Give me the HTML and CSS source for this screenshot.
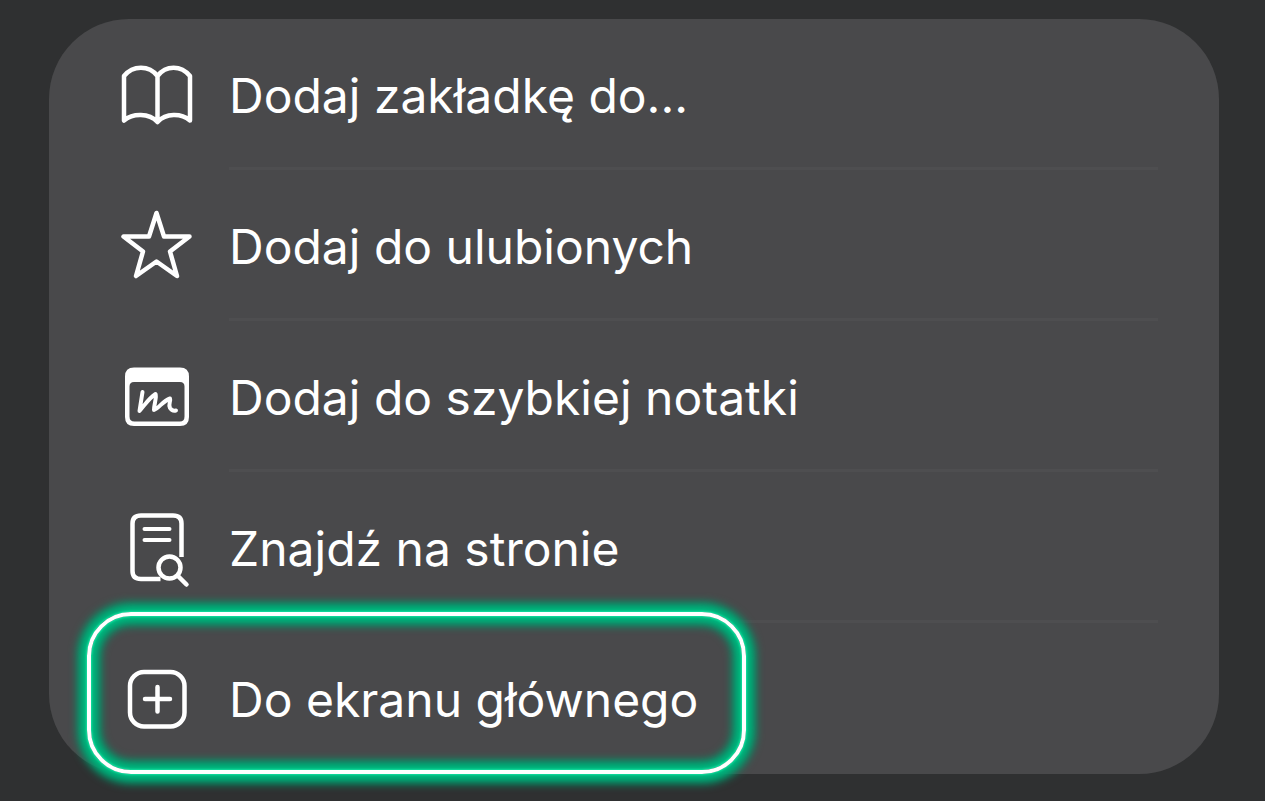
FILE: index.html
```html
<!DOCTYPE html>
<html lang="pl">
<head>
  <meta charset="UTF-8">
  <meta name="viewport" content="width=device-width, initial-scale=1">
  <title>Udostępnij</title>
  <link rel="stylesheet" href="styles.css">
</head>

<body>

  <main class="menu">
    <button type="button" class="menu-item">
      <svg class="icon" viewBox="0 0 72 80" aria-hidden="true">
        <path d="M3 23C12 12 28 12 36.500 23C45 12 60 12 69 23V67.500C60 60 45 60 36.500 69C28 60 12 60 3 67.500ZM36.500 23V69"/>
      </svg>
      <span class="label">Dodaj zakładkę do...</span>
    </button>

    <button type="button" class="menu-item">
      <svg class="icon" viewBox="0 0 72 80" aria-hidden="true">
        <path d="M35.500 9L43 32.500H68.500L49 47.500L56 72L35.500 57.500L15 72L22 47.500L2.500 32.500H28Z"/>
      </svg>
      <span class="label">Dodaj do ulubionych</span>
    </button>

    <button type="button" class="menu-item">
      <svg class="icon" viewBox="0 0 72 80" aria-hidden="true">
        <path class="solid" fill-rule="evenodd" d="M13 12.500H59Q68 12.500 68 21.500V62Q68 71 59 71H13Q4 71 4 62V21.500Q4 12.500 13 12.500ZM13 27Q8.500 27 8.500 31.500V61.500Q8.500 66.500 13.500 66.500H59Q63.500 66.500 63.500 61.500V31.500Q63.500 27 59 27Z"/>
        <path class="thin" d="M21.500 37L18.500 56C23 51 28 43 34.500 39C36 42 33 49 33 55C38 53 42 46 49 43.500C50 46 47 49 49 53C50.500 55.500 52.500 56 55 55.500"/>
      </svg>
      <span class="label">Dodaj do szybkiej notatki</span>
    </button>

    <button type="button" class="menu-item">
      <svg class="icon" viewBox="0 0 72 80" aria-hidden="true">
        <path class="butt" d="M39.500 73H20Q11.500 73 11.500 65V17.500Q11.500 9.500 20 9.500H52Q60.500 9.500 60.500 17.500V51"/>
        <path class="thin" d="M23.500 23H48.500M23.500 34H48.500"/>
        <circle cx="48.500" cy="61.500" r="11"/>
        <path d="M57 70L65.500 78.500"/>
      </svg>
      <span class="label">Znajdź na stronie</span>
    </button>

    <button type="button" class="menu-item highlighted">
      <svg class="icon" viewBox="0 0 72 80" aria-hidden="true">
        <rect x="9" y="15" width="54.500" height="54.500" rx="14"/>
        <path d="M36.500 30V54.500M24 42H49"/>
      </svg>
      <span class="label">Do ekranu głównego</span>
    </button>
  </main>

</body>
</html>
```

FILE: styles.css
```css
*,
*::after {
  box-sizing: border-box;
}

body {
  margin: 0;
  padding: 19px 46px 28px 49px;
  min-height: 100vh;
  background: #2f3031;
  color: #fff;
  font-family: Inter, "Open Sans", sans-serif;
}

.menu {
  display: flex;
  flex-direction: column;
  padding: 0 61px 0 72px;
  border-radius: 80px;
  background: #49494b;
}

.menu-item {
  position: relative;
  display: flex;
  align-items: center;
  gap: 36px;
  width: 100%;
  padding: 0;
  border: none;
  background: none;
  color: inherit;
  font: inherit;
  font-size: 48px;
  text-align: left;
  cursor: pointer;
}

.icon {
  flex: none;
  width: 72px;
  height: 80px;
  margin-bottom: 4px;
  overflow: visible;
  fill: none;
  stroke: #fff;
  stroke-width: 4.5;
  stroke-linecap: round;
  stroke-linejoin: round;
}

.icon .solid {
  fill: #fff;
  stroke: none;
}

.icon .thin {
  stroke-width: 4;
}

.icon .butt {
  stroke-linecap: butt;
}

.label {
  flex: 1;
  padding-top: 6px;
  border-bottom: 3px solid #4e4e50;
  line-height: 142px;
  white-space: nowrap;
}

.menu-item:last-child .label {
  border-bottom-color: transparent;
}

/* neon frame over the selected row */
.highlighted::after {
  content: "";
  position: absolute;
  top: -11px;
  bottom: 0;
  left: -34px;
  width: 659px;
  border: 4px solid #fff;
  border-radius: 44px;
  box-shadow:
    0 0 2px 1px #14e0a0,
    0 0 8px 4px #00c285,
    0 0 9px 10px #00966a,
    inset 0 0 2px 1px #14e0a0,
    inset 0 0 8px 4px #00c285,
    inset 0 0 9px 10px #00966a;
  pointer-events: none;
}
```
